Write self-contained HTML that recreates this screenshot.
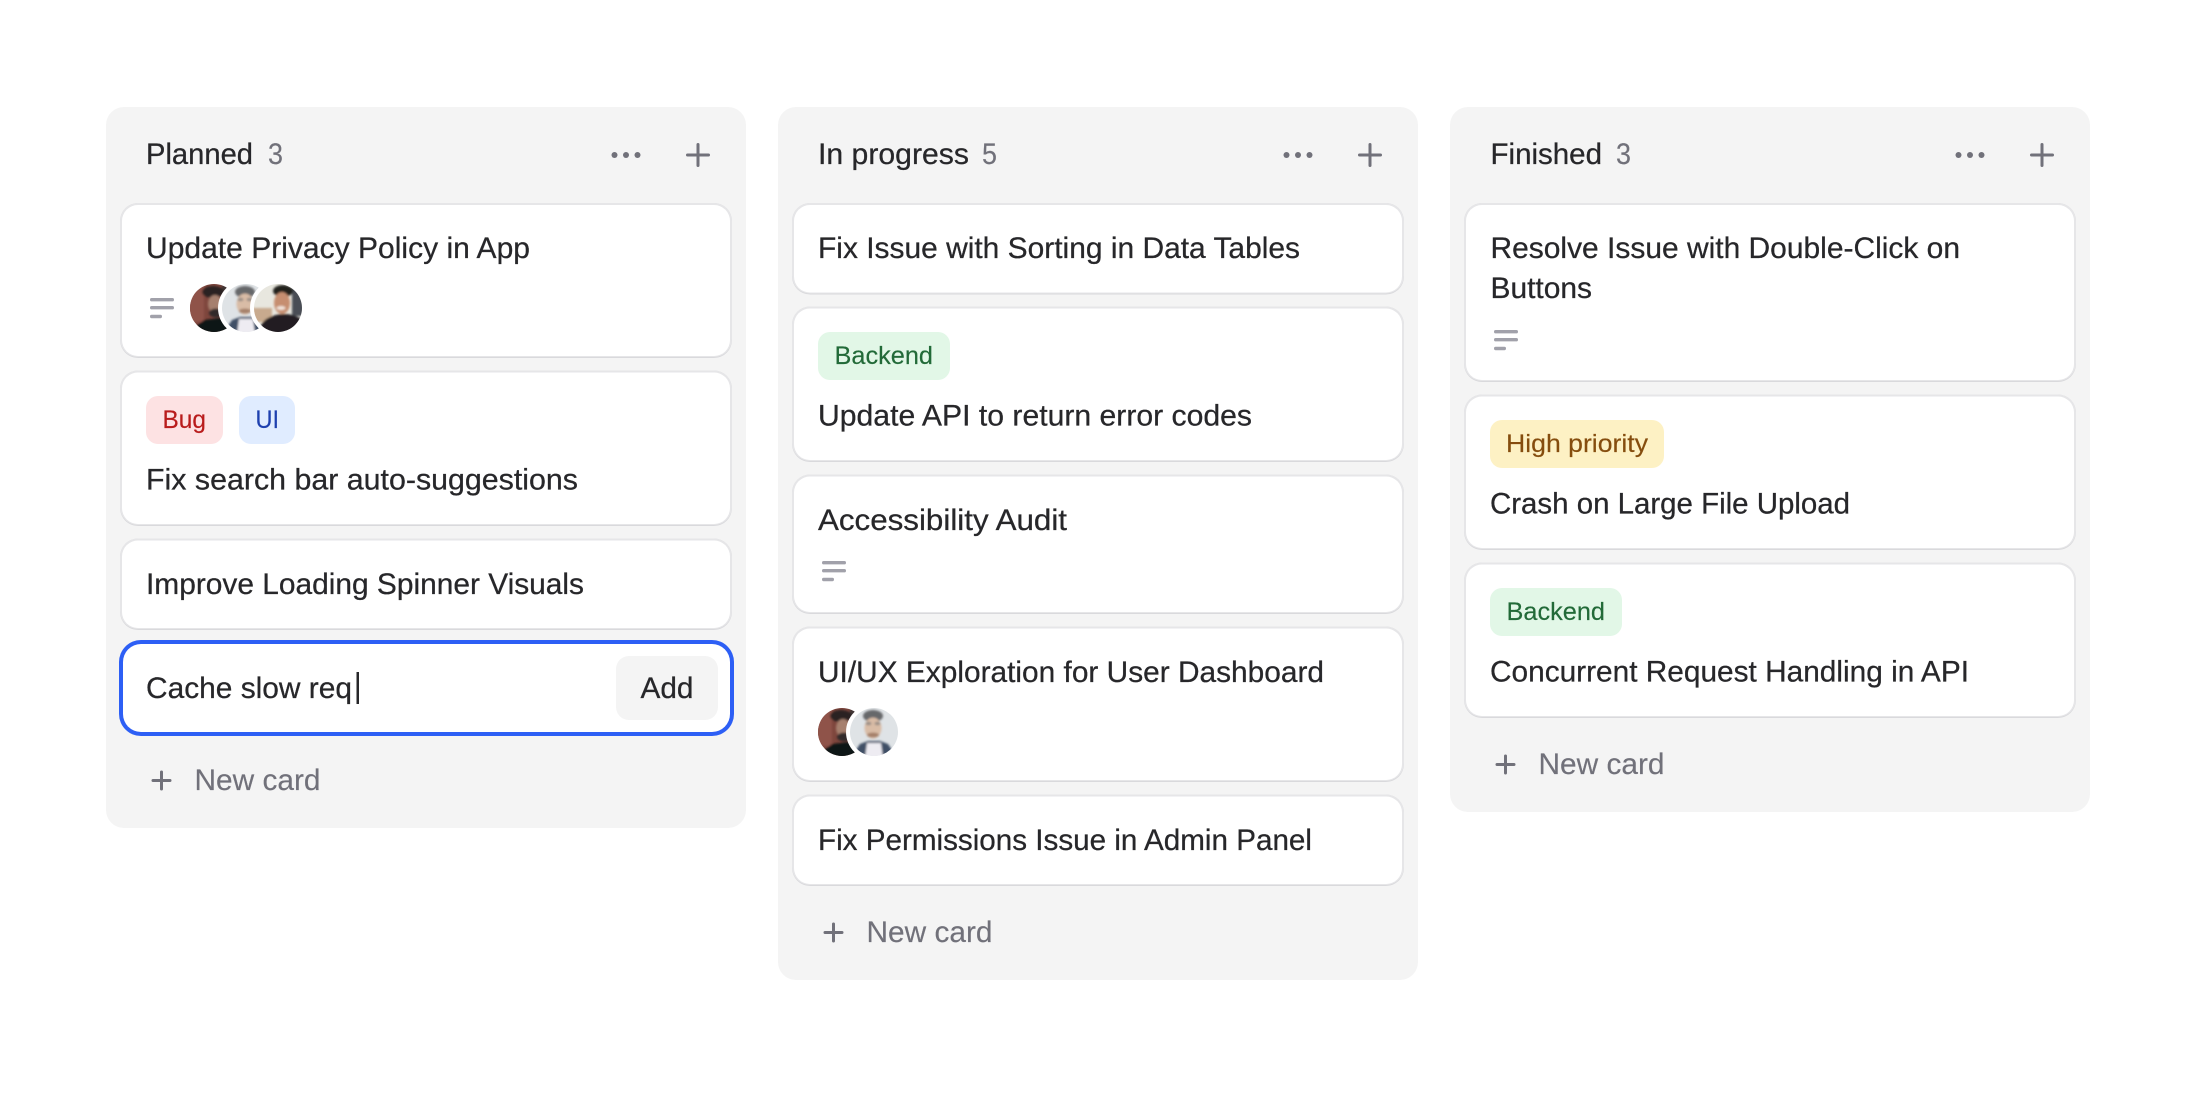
<!DOCTYPE html>
<html lang="en">
<head>
<meta charset="utf-8">
<title>Kanban board</title>
<style>
html,body{margin:0;padding:0;background:#fff;width:2198px;height:1094px;overflow:hidden}
svg{display:block}
text{font-family:"Liberation Sans",Arial,sans-serif;font-size:29.5px}
.t{fill:#27272a;stroke:#27272a;stroke-width:.25px}
.m{fill:#71717a;stroke:#71717a;stroke-width:.15px}
.g{font-size:25px;stroke-width:.15px}
.col{fill:#f4f4f4}
.sh{fill:#d9d9dc}
.bd{fill:#e6e6e8}
.in{fill:#fff}
.ico{stroke:#71717a;stroke-width:3px;stroke-linecap:round;fill:none}
.ln{stroke:#a1a1aa;stroke-width:3.4px;stroke-linecap:round;fill:none}
</style>
</head>
<body>
<svg width="2198" height="1094" viewBox="0 0 2198 1094" xmlns="http://www.w3.org/2000/svg">
<defs>
<filter id="b" x="-30%" y="-30%" width="160%" height="160%"><feGaussianBlur stdDeviation="1"/></filter>
<clipPath id="c"><circle cx="24" cy="24" r="24"/></clipPath>
<g id="a1"><g clip-path="url(#c)"><rect width="48" height="48" fill="#7e463d"/><g filter="url(#b)">
<rect x="-2" y="-2" width="16" height="40" fill="#8f5248"/>
<rect x="32" y="-2" width="18" height="30" fill="#3f3634"/>
<ellipse cx="23" cy="8" rx="11" ry="6" fill="#2a2322"/>
<ellipse cx="25" cy="20" rx="7" ry="9" fill="#a6806e"/>
<ellipse cx="26" cy="29" rx="7" ry="4.5" fill="#33292a"/>
<path d="M4 44 L14 36 L30 34 L46 38 L46 50 L4 50Z" fill="#0f1212"/>
</g></g></g>
<g id="a2"><g clip-path="url(#c)"><rect width="48" height="48" fill="#dfe3e6"/><g filter="url(#b)">
<ellipse cx="23" cy="8" rx="10" ry="6" fill="#66676a"/>
<ellipse cx="23" cy="20" rx="8.5" ry="10.5" fill="#d9bca6"/>
<ellipse cx="18.5" cy="15.5" rx="3" ry="1.8" fill="#9a8e86"/>
<ellipse cx="27.5" cy="15.5" rx="3" ry="1.8" fill="#9a8e86"/>
<ellipse cx="23" cy="27" rx="6" ry="2.4" fill="#a58069"/>
<path d="M2 48 L10 36 L18 33 L30 33 L38 36 L46 48Z" fill="#3f5066"/>
<path d="M15 50 L17 35 L31 35 L33 50Z" fill="#eeecf2"/>
</g></g></g>
<g id="a3"><g clip-path="url(#c)"><rect width="48" height="48" fill="#e8e7df"/><g filter="url(#b)">
<rect x="-2" y="24" width="20" height="14" fill="#c8aa8e"/>
<rect x="38" y="-2" width="12" height="34" fill="#4a4e54"/>
<ellipse cx="29" cy="7" rx="10" ry="6" fill="#22201f"/>
<ellipse cx="28" cy="19" rx="8" ry="11" fill="#c68e70"/>
<ellipse cx="27" cy="24" rx="4.5" ry="2" fill="#f0e2d8"/>
<ellipse cx="30" cy="46" rx="24" ry="16" fill="#201f20"/>
</g></g></g>
<g id="lines"><path class="ln" d="M1.7 1.7H22.3M1.7 9.7H22.3M1.7 18.5H10.3"/></g>
<g id="head"><circle cx="0" cy="0" r="3" fill="#71717a"/><circle cx="11.5" cy="0" r="3" fill="#71717a"/><circle cx="23" cy="0" r="3" fill="#71717a"/><path class="ico" d="M83.5 -10.5V10.5M73 0H94"/></g>
<g id="plus"><path class="ico" d="M0 -8.5V8.5M-8.5 0H8.5"/></g>
</defs>

<!-- Column 1 -->
<rect class="col" x="106" y="107" width="640" height="721" rx="18"/>
<text class="t" x="146" y="164" textLength="107" lengthAdjust="spacingAndGlyphs">Planned</text>
<text class="m" x="268" y="164" textLength="15" lengthAdjust="spacingAndGlyphs">3</text>
<use href="#head" x="614.5" y="155"/>

<rect class="sh" x="120" y="203" width="612" height="155" rx="18"/><rect class="bd" x="120" y="203" width="612" height="154" rx="18"/><rect class="in" x="122" y="205" width="608" height="151" rx="16"/>
<text class="t" x="146" y="258" textLength="384" lengthAdjust="spacingAndGlyphs">Update Privacy Policy in App</text>
<use href="#lines" x="150" y="298"/>
<use href="#a1" x="190" y="284"/>
<circle cx="246" cy="308" r="28" fill="#fff"/><use href="#a2" x="222" y="284"/>
<circle cx="278" cy="308" r="28" fill="#fff"/><use href="#a3" x="254" y="284"/>

<rect class="sh" x="120" y="370.5" width="612" height="155.5" rx="18"/><rect class="bd" x="120" y="370.5" width="612" height="154.5" rx="18"/><rect class="in" x="122" y="372.5" width="608" height="151.5" rx="16"/>
<rect x="146" y="396" width="77" height="48" rx="12" fill="#fde2e3"/>
<text class="g" x="162.5" y="428" textLength="43.5" lengthAdjust="spacingAndGlyphs" fill="#b91c1c" stroke="#b91c1c">Bug</text>
<rect x="239" y="396" width="56" height="48" rx="12" fill="#e0ecff"/>
<text class="g" x="255.5" y="428" textLength="23.5" lengthAdjust="spacingAndGlyphs" fill="#1e40af" stroke="#1e40af">UI</text>
<text class="t" x="146" y="489.5" textLength="432" lengthAdjust="spacingAndGlyphs">Fix search bar auto-suggestions</text>

<rect class="sh" x="120" y="538.5" width="612" height="91.5" rx="18"/><rect class="bd" x="120" y="538.5" width="612" height="90.5" rx="18"/><rect class="in" x="122" y="540.5" width="608" height="87.5" rx="16"/>
<text class="t" x="146" y="594" textLength="438" lengthAdjust="spacingAndGlyphs">Improve Loading Spinner Visuals</text>

<rect x="119" y="640" width="615" height="96" rx="22" fill="#2d5ff5"/><rect class="in" x="123" y="644" width="607" height="88" rx="18"/>
<text class="t" x="146" y="698" textLength="206" lengthAdjust="spacingAndGlyphs">Cache slow req</text>
<rect x="356.5" y="672" width="2.5" height="32" fill="#27272a"/>
<rect x="616" y="656" width="102" height="64" rx="13" fill="#f4f4f4"/>
<text class="t" x="640.5" y="698" textLength="53" lengthAdjust="spacingAndGlyphs">Add</text>

<use href="#plus" x="161.5" y="780.5"/>
<text class="m" x="194.5" y="790" textLength="126" lengthAdjust="spacingAndGlyphs">New card</text>

<!-- Column 2 -->
<rect class="col" x="778" y="107" width="640" height="873" rx="18"/>
<text class="t" x="818" y="164" textLength="151" lengthAdjust="spacingAndGlyphs">In progress</text>
<text class="m" x="982" y="164" textLength="15" lengthAdjust="spacingAndGlyphs">5</text>
<use href="#head" x="1286.5" y="155"/>

<rect class="sh" x="792" y="203" width="612" height="91.5" rx="18"/><rect class="bd" x="792" y="203" width="612" height="90.5" rx="18"/><rect class="in" x="794" y="205" width="608" height="87.5" rx="16"/>
<text class="t" x="818" y="258" textLength="482" lengthAdjust="spacingAndGlyphs">Fix Issue with Sorting in Data Tables</text>

<rect class="sh" x="792" y="306.5" width="612" height="155.5" rx="18"/><rect class="bd" x="792" y="306.5" width="612" height="154.5" rx="18"/><rect class="in" x="794" y="308.5" width="608" height="151.5" rx="16"/>
<rect x="818" y="332" width="132" height="48" rx="12" fill="#e2f7e7"/>
<text class="g" x="834.5" y="364" textLength="98.5" lengthAdjust="spacingAndGlyphs" fill="#226a38" stroke="#226a38">Backend</text>
<text class="t" x="818" y="425.5" textLength="434" lengthAdjust="spacingAndGlyphs">Update API to return error codes</text>

<rect class="sh" x="792" y="474.5" width="612" height="139.5" rx="18"/><rect class="bd" x="792" y="474.5" width="612" height="138.5" rx="18"/><rect class="in" x="794" y="476.5" width="608" height="135.5" rx="16"/>
<text class="t" x="818" y="530" textLength="249" lengthAdjust="spacingAndGlyphs">Accessibility Audit</text>
<use href="#lines" x="822" y="561"/>

<rect class="sh" x="792" y="626.5" width="612" height="155.5" rx="18"/><rect class="bd" x="792" y="626.5" width="612" height="154.5" rx="18"/><rect class="in" x="794" y="628.5" width="608" height="151.5" rx="16"/>
<text class="t" x="818" y="682" textLength="506" lengthAdjust="spacingAndGlyphs">UI/UX Exploration for User Dashboard</text>
<use href="#a1" x="818" y="708"/>
<circle cx="874" cy="732" r="28" fill="#fff"/><use href="#a2" x="850" y="708"/>

<rect class="sh" x="792" y="794.5" width="612" height="91.5" rx="18"/><rect class="bd" x="792" y="794.5" width="612" height="90.5" rx="18"/><rect class="in" x="794" y="796.5" width="608" height="87.5" rx="16"/>
<text class="t" x="818" y="850" textLength="494" lengthAdjust="spacingAndGlyphs">Fix Permissions Issue in Admin Panel</text>

<use href="#plus" x="833.5" y="932.5"/>
<text class="m" x="866.5" y="942" textLength="126" lengthAdjust="spacingAndGlyphs">New card</text>

<!-- Column 3 -->
<rect class="col" x="1450" y="107" width="640" height="705" rx="18"/>
<text class="t" x="1490.5" y="164" textLength="111.5" lengthAdjust="spacingAndGlyphs">Finished</text>
<text class="m" x="1616" y="164" textLength="15" lengthAdjust="spacingAndGlyphs">3</text>
<use href="#head" x="1958.5" y="155"/>

<rect class="sh" x="1464" y="203" width="612" height="179" rx="18"/><rect class="bd" x="1464" y="203" width="612" height="178" rx="18"/><rect class="in" x="1466" y="205" width="608" height="175" rx="16"/>
<text class="t" x="1490.5" y="258" textLength="469.5" lengthAdjust="spacingAndGlyphs">Resolve Issue with Double-Click on</text>
<text class="t" x="1490.5" y="298" textLength="101.5" lengthAdjust="spacingAndGlyphs">Buttons</text>
<use href="#lines" x="1494" y="330"/>

<rect class="sh" x="1464" y="394.5" width="612" height="155.5" rx="18"/><rect class="bd" x="1464" y="394.5" width="612" height="154.5" rx="18"/><rect class="in" x="1466" y="396.5" width="608" height="151.5" rx="16"/>
<rect x="1490" y="420" width="174" height="48" rx="12" fill="#fdf1c4"/>
<text class="g" x="1506" y="452" textLength="142" lengthAdjust="spacingAndGlyphs" fill="#854d0e" stroke="#854d0e">High priority</text>
<text class="t" x="1490" y="513.5" textLength="360" lengthAdjust="spacingAndGlyphs">Crash on Large File Upload</text>

<rect class="sh" x="1464" y="562.5" width="612" height="155.5" rx="18"/><rect class="bd" x="1464" y="562.5" width="612" height="154.5" rx="18"/><rect class="in" x="1466" y="564.5" width="608" height="151.5" rx="16"/>
<rect x="1490" y="588" width="132" height="48" rx="12" fill="#e2f7e7"/>
<text class="g" x="1506.5" y="620" textLength="98.5" lengthAdjust="spacingAndGlyphs" fill="#226a38" stroke="#226a38">Backend</text>
<text class="t" x="1490" y="681.5" textLength="479" lengthAdjust="spacingAndGlyphs">Concurrent Request Handling in API</text>

<use href="#plus" x="1505.5" y="764.5"/>
<text class="m" x="1538.5" y="774" textLength="126" lengthAdjust="spacingAndGlyphs">New card</text>
</svg>
</body>
</html>
